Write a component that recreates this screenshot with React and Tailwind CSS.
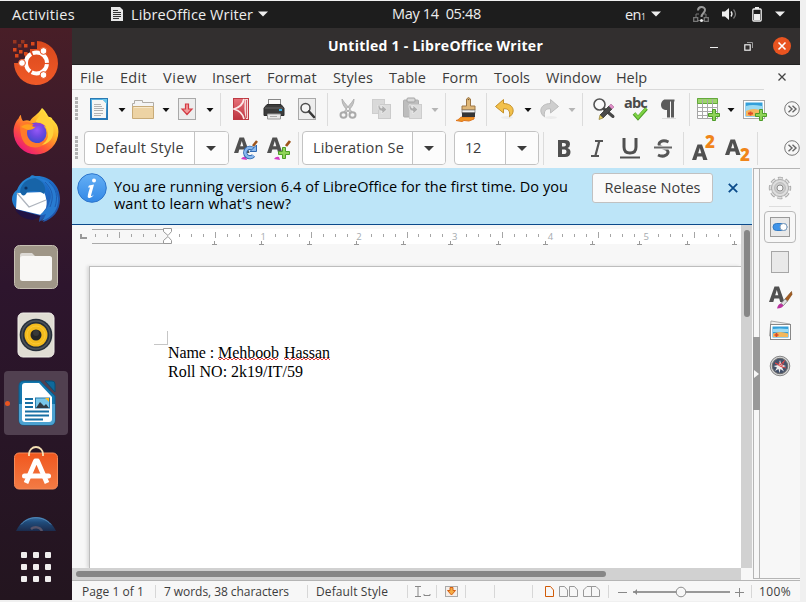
import React, { useLayoutEffect, useRef, useState } from 'react';

// Text whose tracking is adjusted so that it spans exactly `w` pixels.
function Label({ w, className = '', children }) {
  const ref = useRef(null);
  const [ls, setLs] = useState(0);
  useLayoutEffect(() => {
    const width = ref.current.getBoundingClientRect().width;
    setLs((w - width) / String(children).length);
  }, []);
  return (
    <span ref={ref} style={{ letterSpacing: ls + 'px' }} className={'inline-block whitespace-pre ' + className}>
      {children}
    </span>
  );
}

const Svg = ({ w = 24, h = 24, children, className = '' }) => (
  <svg width={w} height={h} viewBox={`0 0 ${w} ${h}`} className={'block shrink-0 ' + className} fill="none">
    {children}
  </svg>
);

const Cell = ({ className = '', children }) => <div className={'flex shrink-0 items-center ' + className}>{children}</div>;
const Sep = ({ className = 'w-[9px]' }) => (
  <div className={'shrink-0 ' + className}>
    <div className="h-[33px] w-px bg-[#dcdcdc]" />
  </div>
);
const Caret = ({ color = '#111', className = 'w-5' }) => (
  <Cell className={'justify-center ' + className}>
    <Svg w={8} h={4} className="mt-[2px]"><path d="M.5 0h7L4 4z" fill={color} /></Svg>
  </Cell>
);
const Grip = () => (
  <Cell className="w-3 pl-[3px]">
    <Svg w={3} h={24}>
      {[0, 1, 2, 3, 4, 5].map((i) => <rect key={i} y={i * 4} width="3" height="3" fill="#b3b3b3" />)}
    </Svg>
  </Cell>
);

/* ---------- dock icons ---------- */
const Ubuntu = () => (
  <Svg w={46} h={46}>
    <defs><linearGradient id="ub" x1="0" y1="0" x2="0" y2="1"><stop stopColor="#d9481c" /><stop offset="1" stopColor="#f05a28" /></linearGradient></defs>
    <path d="M24 1a22 22 0 1 1-23 22h7v-4h4v-6h5V9h7z" fill="url(#ub)" />
    {[[0, 0], [8, 0], [5, 4], [0, 8], [11, 4], [18, 2], [6, 10], [2, 14], [11, 12]].map(([x, y], i) => (
      <rect key={i} x={x} y={y} width="3.5" height="3.5" fill="#d9481c" opacity={i < 3 ? 0.55 : 1} />
    ))}
    <circle cx="23.5" cy="23" r="10.5" stroke="#fff" strokeWidth="4" strokeDasharray="20.2 1.8" strokeDashoffset="-1.2" />
    {[[9, 23], [30.5, 11], [30.5, 35]].map(([x, y]) => <circle key={y} cx={x} cy={y} r="3.4" fill="#fff" stroke="#e5501f" strokeWidth="1" />)}
  </Svg>
);
const Firefox = () => (
  <Svg w={46} h={48}>
    <defs>
      <linearGradient id="ff" x1=".85" y1=".1" x2=".2" y2=".95"><stop stopColor="#ffee45" /><stop offset=".35" stopColor="#ffad26" /><stop offset=".65" stopColor="#ff5a36" /><stop offset="1" stopColor="#e9157d" /></linearGradient>
      <radialGradient id="fp" cx=".55" cy=".35" r=".65"><stop stopColor="#9659f7" /><stop offset=".5" stopColor="#6d48e0" /><stop offset="1" stopColor="#3b4ccc" /></radialGradient>
    </defs>
    <path d="M29 1c4 3 5 7 7 9 2-.2 3 .8 3.500 2.500C44 17 45.500 20 45.400 25A22.400 22.400 0 0 1 .6 25C.4 19 3 14 5.500 11.500 6.500 9.500 7 8 8 8c0 2 .5 4 2 6 3-1 5-1 7 0C20 9 25 8 29 1z" fill="url(#ff)" />
    <circle cx="23" cy="26" r="10.500" fill="url(#fp)" />
    <path d="M7 18c3-4 9-4 15 0-2 3-5 3-7 4-2 3-1 9 3 12 7 5 15 0 17-5 2 8-8 13-17 11C9 38 7 27 7 18z" fill="#ff7a2a" />
    <path d="M29 2c0 7-6 9-6 13 8 0 12 6 12 14-1 5-4 7-6 9 10-2 13-11 11-19C38 13 32 9 29 2z" fill="#ffd13a" />
    <path d="M8 20c4-4 9-3 15-1-2 3-5 4-8 4z" fill="#ffa01e" />
    <path d="M19 19c3-4 10-4 14 1-5-2-7-1-12 0z" fill="#8b41d9" />
  </Svg>
);
const Thunderbird = () => (
  <Svg w={50} h={50}>
    <defs><linearGradient id="tb" x1="0" y1="0" x2="1" y2="1"><stop stopColor="#2c95d8" /><stop offset=".5" stopColor="#1c6bc6" /><stop offset="1" stopColor="#244b9e" /></linearGradient></defs>
    <path d="M6 16C9 8 14 5 19 3c1-2 3-2 5-1 14-1 25 9 25 23 0 12-7 20-17 23l2-5-6 5 1-6-12-2C8 38 2 34 1 26c0-5 2-8 5-10z" fill="url(#tb)" />
    <path d="M6 19 33 18q4 9 2 16l-5 7L5 35z" fill="#fff" />
    <path d="M6 19l12 14 17-7" stroke="#aeb4bd" strokeWidth="1.300" />
    <path d="M4 35l26 7-8 4C12 45 7 41 4 35z" fill="#201344" />
    <path d="M9 18C10 9 16 5 24 4c10 3 12 12 9 16-6-4-12-3-17-2-1 3-3 4-5 3z" fill="#1764a8" />
    <path d="M26 4c12 5 17 17 12 25-1 5-5 8-9 12 2 0 4 0 6-1-1 3-3 5-5 7 12-3 18-13 17-23C45 12 37 5 26 4z" fill="#287bd1" />
    <path d="M38 8c8 7 9 15 6 25M34 8c8 8 9 15 5 25" stroke="#1e5cb0" />
    <circle cx="15" cy="14" r="1.600" fill="#0b3263" />
  </Svg>
);
const Files = () => (
  <Svg w={46} h={46}>
    <rect x="1.500" y="1.500" width="43" height="43" rx="5" fill="#9f9687" stroke="#c6bfb2" />
    <path d="M7 11q0-2 2-2h10l4 4h14q2 0 2 2v5H7z" fill="#dcd9d4" />
    <rect x="7" y="12" width="32" height="25" rx="2.500" fill="#f8f7f5" />
    <path d="M7 16q0-2 2-2h11l3-2h14v6H7z" fill="#f8f7f5" />
  </Svg>
);
const Rhythmbox = () => (
  <Svg w={38} h={46}>
    <rect x="1" y="1" width="36" height="44" rx="5" fill="#e0ddd3" stroke="#f0eee8" />
    <circle cx="19" cy="23" r="16.300" fill="#27303a" />
    <circle cx="19" cy="23" r="14" stroke="#4d5359" strokeWidth="1.500" />
    <circle cx="19" cy="23" r="11.500" fill="#f3bb1c" />
    <circle cx="19" cy="23" r="9" stroke="#f8c938" strokeWidth="1" />
    <circle cx="19" cy="23" r="5.500" fill="#252525" />
    <circle cx="19" cy="21" r="3" fill="#383838" />
  </Svg>
);
const Writer = () => (
  <Svg w={38} h={46}>
    <path d="M6 1h16l15 15v24q0 5-5 5H6q-5 0-5-5V6q0-5 5-5z" fill="#1477ad" stroke="#0b5c8b" />
    <path d="M1 24h36v16q0 5-5 5H6q-5 0-5-5z" fill="#4ba1d0" />
    <path d="M7 3h14l13 14v22q0 3-3 3H7q-3 0-3-3V6q0-3 3-3z" fill="#fff" />
    <path d="M27 1h7q3 0 3 3v8z" fill="#0e699b" stroke="#0b4c72" />
    <path d="M7 19h8M7 23h8M7 27h8M7 31.500h24M7 35.500h24M7 39.500h18" stroke="#176fa3" strokeWidth="1.800" />
    <rect x="17.500" y="18" width="14" height="10" fill="#78c7ea" stroke="#267bab" />
    <path d="M18 28l4-6 4 4 2-2 3 4z" fill="#323b42" /><path d="M27 18h4v4z" fill="#ffb91e" />
  </Svg>
);
const Software = () => (
  <Svg w={46} h={44}>
    <defs><linearGradient id="sw" x1="0" y1="0" x2="0" y2="1"><stop stopColor="#f1571e" /><stop offset="1" stopColor="#f27b45" /></linearGradient></defs>
    <rect x="1.500" y="7" width="43" height="36" rx="4.500" fill="url(#sw)" stroke="#f68a59" />
    <path d="M16 10V8a7 7 0 0 1 14 0v2" stroke="#f5e0b4" strokeWidth="1.800" />
    <path d="M13 37L22.500 15h2L34 37" stroke="#fff" strokeWidth="4.800" strokeLinejoin="round" />
    <rect x="9" y="27.500" width="29" height="5" rx="2.500" fill="#fff" />
  </Svg>
);
const HelpPeek = () => (
  <Svg w={46} h={15}>
    <defs><linearGradient id="hp" x1="0" y1="0" x2="0" y2="1"><stop stopColor="#346fa5" /><stop offset=".4" stopColor="#1f4a79" /><stop offset="1" stopColor="#1b2b4c" /></linearGradient></defs>
    <path d="M3 15C8 5 15 1 23 1s15 4 20 14z" fill="url(#hp)" /><path d="M8 8.500C16-.5 30-.5 38 8.500" stroke="#5488b5" />
    <path d="M18 13c3-2.500 9-2.500 11 2" stroke="#57546a" strokeWidth="2.500" />
  </Svg>
);

/* ---------- toolbar icons ---------- */
const NewDoc = () => (
  <Svg>
    <defs><linearGradient id="nd" x1="0" y1="0" x2="0" y2="1"><stop stopColor="#59b4e4" /><stop offset="1" stopColor="#2472b8" /></linearGradient></defs>
    <rect x="3.500" y="1.500" width="17" height="21" fill="url(#nd)" stroke="#2a7ab3" />
    <path d="M5 3h11l3 3v15H5z" fill="#f6f6f4" /><path d="M15 2h5v5z" fill="#67c6ec" />
    <path d="M7 7.500h7M7 9.500h8M7 11.500h10M7 13.500h9M7 16.500h9M7 18.500h7" stroke="#b2b2b2" />
  </Svg>
);
const Folder = () => (
  <Svg>
    <path d="M1.500 20V6.500h2v-3h8v2h11V20z" fill="#f4f4f4" stroke="#b0aca6" />
    <path d="M1.500 9.500h21v12h-21z" fill="#edd3a4" stroke="#c8ab78" /><path d="M3 10.500h18" stroke="#f8e8ca" />
  </Svg>
);
const Plate = ({ fill = '#ededed' }) => <rect x="3.500" y="1.500" width="17" height="21" fill={fill} stroke="#a9a9a9" />;
const Save = () => (
  <Svg><Plate /><path d="M10.500 7h3v5h3.500L12 17.500 7 12h3.500z" fill="#f29a9a" stroke="#d33a43" strokeWidth="1.200" /></Svg>
);
const Pdf = () => (
  <Svg>
    <defs><linearGradient id="pd" x1="0" y1="0" x2="0" y2="1"><stop stopColor="#e77179" /><stop offset="1" stopColor="#bd3440" /></linearGradient></defs>
    <rect x="4.500" y="1.500" width="15" height="21" fill="url(#pd)" stroke="#bd3943" />
    <path d="M15 2C14 7 10 10.500 5 12c5 1.500 9 5 10 10" stroke="#fbeaea" strokeWidth="1.800" />
    <path d="M16 2h3v20h-2c-2-7-2-13-1-20z" fill="#f5d8d9" /><path d="M17.500 3v18" stroke="#d4636c" />
  </Svg>
);
const Print = () => (
  <Svg>
    <rect x="6.500" y="2.500" width="12" height="6" fill="#fafafa" stroke="#888" />
    <path d="M5 7.500h14l3 3.500v7.500H2V11z" fill="#3b3b3b" stroke="#2c2c2c" /><path d="M2.500 11h19" stroke="#666" />
    <rect x="17" y="12" width="3" height="2" fill="#3bb0e8" />
    <path d="M5.500 17h13v5h-13z" fill="#e9e9e9" stroke="#999" /><path d="M8 19.500h7" stroke="#aaa" />
  </Svg>
);
const Preview = () => (
  <Svg><Plate /><circle cx="10.500" cy="11" r="4.500" fill="#f5f5f5" stroke="#4d4d4d" strokeWidth="1.500" /><path d="M14 14.500l5 5.500" stroke="#383838" strokeWidth="2.600" strokeLinecap="round" /></Svg>
);
const Cut = () => (
  <Svg>
    <path d="M6 2c0 6 3 9 8 14l2-1C12 9 9 7 6 2zM18 2c0 6-3 9-8 14l-2-1c4-6 7-8 10-13z" fill="#c5c5c5" stroke="#a6a6a6" strokeWidth=".8" />
    <ellipse cx="7.500" cy="18" rx="3" ry="2.700" stroke="#aaa" strokeWidth="2" /><ellipse cx="16.500" cy="18" rx="3" ry="2.700" stroke="#aaa" strokeWidth="2" />
  </Svg>
);
const FaintArrow = () => <path transform="translate(0 1)" d="M9 7c0 4 1 6 4 6v3l5-4.500L13 7v3c-2 0-2-1-2-3z" fill="#adadad" stroke="#f0f0f0" strokeWidth=".7" />;
const Copy = () => (
  <Svg><rect x="3.500" y="2.500" width="12" height="14" fill="#d9d9d9" stroke="#cecece" /><rect x="9.500" y="7.500" width="12" height="14" fill="#dcdcdc" stroke="#cbcbcb" /><FaintArrow /></Svg>
);
const Paste = () => (
  <Svg><rect x="3.500" y="3" width="15" height="17" rx="1" fill="#bdbdbd" stroke="#afafaf" /><rect x="7" y="1" width="8" height="4" rx="1" fill="#d8d8d8" stroke="#a4a4a4" /><rect x="9.500" y="7.500" width="12" height="14" fill="#dcdcdc" stroke="#cdcdcd" /><FaintArrow /></Svg>
);
const Brush = () => (
  <Svg w={24} h={26}>
    <path d="M2 24.500c3 0 4-4 6-3.500h12v2l-5 2-5-.5-2 1z" fill="#f09522" stroke="#dd751f" />
    <path d="M12.500 3q2-3 4 0v7h4.500v4H8v-4h4.500z" fill="#dfb778" stroke="#9d7644" />
    <rect x="8" y="14" width="13" height="3" fill="#f1f1f1" stroke="#777" strokeWidth=".7" /><rect x="8" y="16.500" width="13" height="4.500" fill="#363636" />
    <circle cx="14.500" cy="3.500" r=".8" fill="#765c37" />
  </Svg>
);
const Undo = ({ faded, flip }) => (
  <Svg>
    <ellipse cx="14" cy="20.500" rx="6" ry="1.500" fill="#ececec" />
    <g transform={flip ? 'translate(24 0) scale(-1 1)' : undefined}>
      <path d="M10.500 2.500L2.500 9.500l8 6.500v-4.200c4.500-.5 7 2 6 8 6-4 5-13-6-13.300z" fill={faded ? '#cecece' : '#f3c14b'} stroke={faded ? '#bcbcbc' : '#c4902a'} strokeLinejoin="round" />
    </g>
  </Svg>
);
const Find = () => (
  <Svg>
    <circle cx="7.500" cy="7.500" r="5.500" fill="#fafafa" stroke="#555" strokeWidth="1.600" /><path d="M12 12l9 7.500" stroke="#484848" strokeWidth="3" strokeLinecap="round" />
    <path d="M8 18l9-9 3 3-9 9z" fill="#4a4a4a" stroke="#333" strokeWidth=".8" /><path d="M17 9l2-2 3 3-2 2z" fill="#df8ec8" stroke="#ac6798" strokeWidth=".6" /><path d="M8 18l-1 4.500 4-1.500z" fill="#e5cf60" stroke="#8d7b34" strokeWidth=".7" />
  </Svg>
);
const Spell = () => (
  <div className="relative h-6 w-6">
    <span className="absolute left-0 top-[-4px] font-['Open_Sans',sans-serif] text-[14.5px] font-bold leading-5 tracking-[-0.8px] text-[#4a4a4a]">abc</span>
    <Svg className="absolute inset-0"><path d="M10 16.500l4 4.500 8.500-9.500" stroke="#4c9c27" strokeWidth="3.600" /><path d="M10.500 16.500l3.500 4 8-9" stroke="#7ed344" strokeWidth="2.200" /></Svg>
  </div>
);
const Pilcrow = () => (
  <Svg><path d="M8 2.500h9.500v2H17v16h-3v-16h-1v16h-3V13c-4 0-6-2-6-5s2-5.500 4-5.500z" fill="#5b5b5b" /><path d="M5 21.500h14" stroke="#ddd" /></Svg>
);
const Plus = ({ x = 0, y = 0 }) => <path transform={`translate(${x} ${y})`} d="M4 0h3v4h4v3H7v4H4V7H0V4h4z" fill="#8fd457" stroke="#4d9c28" />;
const Table = () => (
  <Svg w={25}>
    <path d="M.5 1.500h20v20H.5z" fill="#fff" stroke="#a5a5a5" /><path d="M.5 1.500h20v5H.5z" fill="#9bd56a" stroke="#64a93c" />
    <path d="M5.500 2v20M10.500 2v20M15.500 2v20M1 10.500h20M1 14.500h20M1 18.500h20" stroke="#a9a9a9" /><Plus x={11.500} y={12.500} />
  </Svg>
);
const Picture = () => (
  <Svg w={25}>
    <rect x=".5" y="3.500" width="21" height="18" fill="#fff" stroke="#a7a7a7" /><rect x="2.500" y="5.500" width="17" height="14" fill="#339fda" />
    <path d="M3 9q6-2 16 0v5H3z" fill="#9bdaf3" /><path d="M3 14q8-4 16 0v5H3z" fill="#f4b75e" /><path d="M5 16.500h5M7.500 14.500v4" stroke="#e24d27" strokeWidth="1.800" />
    <Plus x={12.500} y={12.500} />
  </Svg>
);
const More = () => (
  <Svg w={16} h={16}><circle cx="8" cy="8" r="7.300" stroke="#777" /><path d="M4.500 4.800L8 8l-3.500 3.200M8.500 4.800L12 8l-3.500 3.200" stroke="#666" strokeWidth="1.400" /></Svg>
);
const BigA = () => <path d="M1 18L6.500 2.500h4.500L16.500 18h-4.300l-1-3.500H6.300L5.300 18zM7.200 11.300h3.100L8.800 6z" fill="#505050" />;
const StyleUpdate = () => (
  <Svg w={26} h={26}><BigA /><path d="M24 6l-4 5" stroke="#9c531a" strokeWidth="2.500" /><path d="M8 24q2-3 5-2l1 3z" fill="#d33ac3" /><path d="M20 14a4.700 4.700 0 1 0 .5 6.500" stroke="#2f68b0" strokeWidth="4.200" /><path d="M20 14a4.700 4.700 0 1 0 .5 6.500" stroke="#8ab8ed" strokeWidth="2.400" /><path d="M17 16.500h6.500V10z" fill="#8ab8ed" stroke="#2f68b0" /></Svg>
);
const StyleNew = () => (
  <Svg w={26} h={26}><BigA /><path d="M24 6l-4 5" stroke="#9c531a" strokeWidth="2.800" /><path d="M8 24q2-3 5-2l1 3z" fill="#d33ac3" /><Plus x={12.500} y={12.500} /></Svg>
);
const StylesSide = () => (
  <Svg w={26} h={26}>
    <BigA />
    <path d="M23.500 7.500l.5 3-4.500 6.500-2.500-2z" fill="#a55c20" stroke="#75400f" strokeWidth=".6" />
    <path d="M17 15l2.500 2-4 4.500-2.500-2z" fill="#e2e2e2" stroke="#777" strokeWidth=".8" />
    <path d="M9 24.500q1-4.500 4-5l2.500 2q-1.500 3-6.500 3z" fill="#b9329f" />
  </Svg>
);
const OrangeTwo = ({ className }) => (
  <span className={"absolute right-[-1px] font-['Open_Sans',sans-serif] text-[17px] font-extrabold leading-5 text-[#f08519] " + className}>2</span>
);

function Combo({ className, text, tw, boxClass, arrowClass }) {
  return (
    <div className={'flex h-[34px] shrink-0 rounded-[4px] border border-[#c3c3c3] bg-white text-[#3c3c3c] ' + className}>
      <div className={'flex items-center pb-px pl-[10px] ' + boxClass}><Label w={tw}>{text}</Label></div>
      <div className={'flex items-center justify-center rounded-r-[3px] border-l border-[#c3c3c3] bg-[#fcfcfc] ' + arrowClass}>
        <Svg w={10} h={5}><path d="M0 0h10L5 5z" fill="#3c3c3c" /></Svg>
      </div>
    </div>
  );
}

const menus = [['File', 24, 'w-10'], ['Edit', 27, 'w-[43px]'], ['View', 34, 'w-[49px]'], ['Insert', 39, 'w-[55px]'], ['Format', 50, 'w-[66px]'], ['Styles', 40, 'w-14'], ['Table', 37, 'w-[53px]'], ['Form', 36, 'w-[52px]'], ['Tools', 36, 'w-[52px]'], ['Window', 55, 'w-[70px]'], ['Help', 31, 'w-10']];

function TopBar() {
  const tri = <Svg w={10} h={6}><path d="M0 .5h10L5 5.500z" fill="#eee" /></Svg>;
  return (
    <div className="flex h-[27px] w-[800px] items-center bg-[#1d1d1d] pl-3 text-[#eeeeee]">
      <Cell className="w-[99px]"><Label w={63}>Activities</Label></Cell>
      <Cell className="w-5 pb-px"><Svg w={12} h={14}><path d="M0 0h9l3 3v11H0z" fill="#e6e6e6" /><path d="M2 3.500h5M2 5.500h8M2 7.500h8M2 9.500h8M2 11.500h6" stroke="#333" /></Svg></Cell>
      <Cell className="w-[127px]"><Label w={122}>LibreOffice Writer</Label></Cell>
      <Cell className="w-[134px] pb-px">{tri}</Cell>
      <Cell className="w-[233px] pb-px"><Label w={89}>May 14  05:48</Label></Cell>
      <Cell className="w-[26px]"><Label w={16}>en</Label><span className="mt-1 text-[8.5px]">1</span></Cell>
      <Cell className="w-[42px] pb-px">{tri}</Cell>
      <Cell className="w-[29px]">
        <Svg w={16} h={17}><path d="M3 11V8h3M13 11V8h-2M5 14.500h6" stroke="#777" /><path d="M.7 11.700h4v3.600h-4zM11.300 11.700h4v3.600h-4z" stroke="#777" strokeWidth="1.300" /><path d="M5 4.500c0-4.500 7-4.500 7-.5 0 3-3.500 3-3.500 7" stroke="#999" strokeWidth="2" /><circle cx="8.500" cy="14.500" r="1.500" fill="#eee" /></Svg>
      </Cell>
      <Cell className="w-[30px] pb-px"><Svg w={15} h={14}><path d="M0 4.500h3L7 1v12L3 9.500H0z" fill="#eee" /><path d="M9 4.500q2 2.500 0 5" stroke="#eee" strokeWidth="1.300" /><path d="M11.500 2.500q4 4.500 0 9" stroke="#777" strokeWidth="1.300" /></Svg></Cell>
      <Cell className="w-[23px] pb-px"><Svg w={10} h={15}><path d="M3 0h4v2H3z" fill="#eee" /><rect x=".8" y="2" width="8.400" height="12" rx="1" stroke="#eee" strokeWidth="1.300" /><path d="M2 7h6v6H2z" fill="#eee" /></Svg></Cell>
      <Cell className="pb-px">{tri}</Cell>
    </div>
  );
}

function Dock() {
  return (
    <div className="flex h-[572px] w-[72px] shrink-0 flex-col items-center overflow-hidden bg-linear-to-b from-[#481e27] via-[#2d152d] via-45% to-[#23151f]">
      <div className="flex h-[69px] w-full items-center justify-center"><Ubuntu /></div>
      <div className="flex h-[67px] items-center"><Firefox /></div>
      <div className="flex h-[69px] items-center"><Thunderbird /></div>
      <div className="flex h-[67px] items-center"><Files /></div>
      <div className="flex h-[69px] items-center"><Rhythmbox /></div>
      <div className="mt-[2px] flex h-16 w-16 items-center rounded-[4px] bg-[#514050]"><div className="ml-px mr-2 size-[5px] rounded-full bg-[#e95420]" /><Writer /></div>
      <div className="mt-[11px] flex h-[44px] items-center"><Software /></div>
      <div className="mt-[26px]"><HelpPeek /></div>
      <div className="mt-[21px] grid grid-cols-3 gap-[6px]">
        {Array.from({ length: 9 }, (_, i) => <div key={i} className="size-[6px] rounded-[1px] bg-[#f0eeee]" />)}
      </div>
    </div>
  );
}

function TitleBar() {
  return (
    <div className="flex h-[37px] items-center border-b border-[#222] bg-[#322f2f] text-white">
      <div className="w-[636px] pl-64 text-[14px] font-bold"><Label w={215}>Untitled 1 - LibreOffice Writer</Label></div>
      <Cell className="w-[36px]"><Svg w={12} h={6}><path d="M2 4.500h8" stroke="#eee" /></Svg></Cell>
      <Cell className="w-[29px]"><Svg w={9} h={9}><rect x=".8" y="2.800" width="5.400" height="5.400" stroke="#eee" strokeWidth="1.200" /><path d="M3 .5h5.500V6" stroke="#999" /></Svg></Cell>
      <Svg w={18} h={19}><circle cx="9" cy="9" r="9" fill="#e95420" /><path d="M5.500 5.500l7 7m0-7l-7 7" stroke="#fff" strokeWidth="1.600" /></Svg>
    </div>
  );
}

function Toolbars() {
  return (
    <>
      <div className="flex h-[39px] items-center pb-px">
        <Grip />
        <Cell className="ml-[3px] w-6"><NewDoc /></Cell><Caret className="w-5 pl-px" />
        <Cell className="w-6"><Folder /></Cell><Caret className="w-5 pl-px" />
        <Cell className="w-6"><Save /></Cell><Caret className="w-[21px]" />
        <Sep />
        <Cell className="w-[33px]"><Pdf /></Cell><Cell className="w-[33px]"><Print /></Cell><Cell className="w-8"><Preview /></Cell>
        <Sep />
        <Cell className="w-[33px]"><Cut /></Cell><Cell className="w-[31px]"><Copy /></Cell><Cell className="w-6"><Paste /></Cell><Caret className="w-[21px]" color="#b5b5b5" />
        <Sep />
        <Cell className="w-8"><Brush /></Cell>
        <Sep className="w-[7px]" />
        <Cell className="w-6"><Undo /></Cell><Caret className="w-5 pl-px" />
        <Cell className="w-6"><Undo faded flip /></Cell><Caret className="w-[21px]" color="#b5b5b5" />
        <Sep className="w-[10px]" />
        <Cell className="w-8"><Find /></Cell><Cell className="w-[33px]"><Spell /></Cell><Cell className="w-8"><Pilcrow /></Cell>
        <Sep className="w-2" />
        <Cell className="w-6"><Table /></Cell><Caret className="w-[22px] pr-[3px]" />
        <Cell className="w-[41px]"><Picture /></Cell>
        <More />
      </div>
      <div className="flex h-[39px] items-center pb-px">
        <Grip />
        <Combo className="w-[145px]" text="Default Style" tw={89} boxClass="w-[109px]" arrowClass="w-[34px] pr-px" />
        <Cell className="ml-[4px] w-[33px]"><StyleUpdate /></Cell><Cell className="w-8"><StyleNew /></Cell>
        <Sep className="w-1" />
        <Combo className="w-[144px]" text="Liberation Se" tw={91} boxClass="w-[109px]" arrowClass="w-[33px] pr-px" />
        <Combo className="ml-2 w-[85px]" text="12" tw={16} boxClass="w-[50px]" arrowClass="w-[33px]" />
        <Cell className="w-1" />
        <Sep className="w-[15px]" />
        <Cell className="w-8"><Svg h={22}><path d="M0 3h7q5 0 5 4.200Q12 10 9.500 11q3 1 3 4Q12.500 20 7 20H0zM4 6v3.500h2q2 0 2-1.700T6 6zm0 6.500V17h2.500q2 0 2-2.200t-2-2.300z" fill="#505050" /></Svg></Cell>
        <Cell className="w-[30px]"><Svg w={16} h={22}><path d="M5 4h8M1 19h8M9.300 4L5.300 19" stroke="#555" strokeWidth="2.200" /></Svg></Cell>
        <Cell className="w-[34px]"><Svg w={20} h={24}><path d="M4 2v9q0 6 6 6t6-6V2" stroke="#505050" strokeWidth="3" /><path d="M0 21.500h20" stroke="#505050" strokeWidth="2" /></Svg></Cell>
        <Cell className="w-[29px]"><Svg w={19} h={22}><path d="M14.500 5Q10 3 7 4.500 3 7 7 10l6 2.500Q16 17 10 19q-3 .5-6-1" stroke="#555" strokeWidth="3" /><path d="M0 10.500h18" stroke="#f7f7f7" strokeWidth="4" /><path d="M0 10.500h18" stroke="#666" strokeWidth="2" /></Svg></Cell>
        <Sep className="w-[9px]" />
        <Cell className="w-[33px]"><div className="relative h-7 w-[22px]"><Svg w={22} h={28}><g transform="translate(-1 8)"><BigA /></g></Svg><OrangeTwo className="top-[-2px]" /></div></Cell>
        <Cell className="w-8"><div className="relative h-7 w-6"><Svg w={24} h={28}><g transform="translate(-1 3)"><BigA /></g></Svg><OrangeTwo className="bottom-[-3px]" /></div></Cell>
        <Sep className="w-[27px]" />
        <More />
      </div>
    </>
  );
}

function Ruler() {
  const ticks = [];
  for (let i = -6; i < 48; i++) {
    const x = 95.6 + i * 11.97;
    if (i % 8 === 0 || x < 22) continue;
    ticks.push(<rect key={i} x={Math.floor(x)} y={i % 4 === 0 ? 7 : 9} width="1" height={i % 4 === 0 ? 6 : 3} fill="#a5a5a5" />);
  }
  return (
    <Svg w={669} h={41} className="font-['Open_Sans',sans-serif]">
      <path d="M96 4h573v15H96z" fill="#fff" /><path d="M20 4.500h75M20 18.500h75" stroke="#aaa" />
      <path d="M9 9v4h6" stroke="#999" strokeWidth="2" />
      {ticks}
      {[1, 2, 3, 4, 5].map((n) => <text key={n} x={95.500 + n * 95.750} y="14.5" fontSize="9.500" textAnchor="middle" fill="#a6abb0">{n}</text>)}
      {Array.from({ length: 12 }, (_, i) => <path key={i} d={`M${Math.round(142 + i * 47.25)}.500 16v3m-2.500 .5h5`} stroke="#999" />)}
      <path d="M91.500 3.500h8v3l-3.500 4-4.500-4zM91.500 18.500h8v-3l-3.500-4-4.500 4z" fill="#fff" stroke="#999" />
    </Svg>
  );
}

const Squiggle = ({ w }) => {
  let d = 'M0 1';
  for (let x = 2, i = 0; x <= w; x += 2, i++) d += `L${x} ${i % 2 ? 1 : 3}`;
  return <Svg w={w} h={4} className="absolute left-0 top-[14px]"><path d={d} stroke="#e33b3b" /></Svg>;
};

function Editor() {
  return (
    <div className="flex h-[343px]">
      <div className="h-[343px] w-[669px] overflow-hidden">
        <Ruler />
        <div className="ml-[17px] h-[302px] border-l border-t border-[#bdbdbd] bg-white shadow-[-2px_0_3px_#d9d9d9]">
          <div className="ml-[64px] mt-[64px] h-[14px] w-[14px] border-b border-r border-[#c6c6c6]" />
          <div className="ml-[78px] mt-[-2px] font-['Liberation_Serif',serif] text-[16px] leading-[19px] text-black">
            <div className="flex whitespace-pre"><Label w={50}>Name : </Label><span className="relative"><Label w={61}>Mehboob</Label><Squiggle w={61} /></span><span className="relative ml-[5px]"><Label w={46}>Hassan</Label><Squiggle w={46} /></span></div>
            <div><Label w={135}>Roll NO: 2k19/IT/59</Label></div>
          </div>
        </div>
      </div>
      <div className="w-[11px] bg-[#d1d1d1] pl-[3px] pt-[5px]"><div className="h-[87px] w-[6px] rounded-[3px] bg-[#868686]" /></div>
    </div>
  );
}

function InfoBar() {
  return (
    <div className="flex h-[57px] border-b border-[#0c4a8b] bg-[#bde5f8] text-black">
      <div className="w-[42px] pl-[5px] pt-[5px]">
        <Svg w={31} h={31}><defs><linearGradient id="inf" x1="0" y1="0" x2="0" y2="1"><stop stopColor="#65b0f5" /><stop offset="1" stopColor="#3388e6" /></linearGradient></defs><circle cx="15" cy="15" r="14.300" fill="url(#inf)" stroke="#2d75cc" /><circle cx="17" cy="7.500" r="2" fill="#fff" /><path d="M12 12.500l5-1-3 11q0 2 3-1-3 5-6 3-1-1 2-10h-2z" fill="#fff" /></Svg>
      </div>
      <div className="w-[478px] pt-[10px] leading-[17px]">
        <div className="h-[17px]"><Label w={454}>You are running version 6.4 of LibreOffice for the first time. Do you</Label></div>
        <div className="h-[17px]"><Label w={177}>want to learn what's new?</Label></div>
      </div>
      <div className="mt-[5px] flex h-[30px] w-[121px] items-center justify-center rounded-[3px] border border-[#c1c1c1] bg-[#fafafa] pb-px text-[#3c3c3c]"><Label w={96}>Release Notes</Label></div>
      <Svg w={10} h={10} className="ml-[15px] mt-[15px]"><path d="M.8.8l8.400 8.400m0-8.400L.8 9.200" stroke="#0b4b8a" strokeWidth="1.800" /></Svg>
    </div>
  );
}

function Sidebar() {
  return (
    <div className="flex h-[411px] w-[47px] border-b border-t border-[#b5b5b5]">
      <div className="w-[7px] border-l border-r border-[#b5b5b5]">
        <div className="-ml-px mt-[168px] flex h-[73px] w-[7px] items-center bg-[#999]"><Svg w={6} h={8}><path d="M1 0l5 4-5 4z" fill="#f7f7f7" /></Svg></div>
      </div>
      <div className="flex w-10 flex-col items-center">
        <Svg className="mt-[7px]"><circle cx="12" cy="12" r="9.500" stroke="#a3a3a3" strokeWidth="3.400" strokeDasharray="4.600 2.862" strokeDashoffset="2.300" /><circle cx="12" cy="12" r="9.200" stroke="#dedede" strokeWidth="2.400" strokeDasharray="3.600 3.626" strokeDashoffset="1.800" /><circle cx="12" cy="12" r="8.500" fill="#dedede" stroke="#a0a0a0" strokeWidth=".8" /><circle cx="12" cy="12" r="5.500" fill="#ccc" stroke="#b0b0b0" strokeWidth=".7" /><circle cx="12" cy="12" r="3" fill="#f7f7f7" stroke="#8c8c8c" /></Svg>
        <div className="mt-[6px] h-px w-[22px] bg-[#ddd]" />
        <div className="mt-[4px] flex h-8 w-8 items-center justify-center rounded-[4px] border border-[#b9b9b9]"><Svg w={20} h={20}><rect x=".5" y=".5" width="19" height="19" fill="#e8e8e8" stroke="#999" /><rect x="3" y="6.500" width="14" height="7" rx="3.500" fill="#3f94e9" stroke="#327bc5" /><circle cx="13.500" cy="10" r="3.500" fill="#fff" stroke="#89a2bb" /></Svg></div>
        <Svg w={18} h={22} className="mt-2"><rect x=".5" y=".5" width="17" height="21" fill="#e9e9e9" stroke="#a6a6a6" /></Svg>
        <div className="ml-px mt-[11px]"><StylesSide /></div>
        <div className="mt-[9px]"><Svg w={25}><path d="M3 2l19 3-2 14L1.500 17z" fill="#eee" stroke="#aaa" /><g transform="translate(2 2)"><rect x=".5" y="3.500" width="20" height="15" fill="#fff" stroke="#888" /><rect x="2.500" y="5.500" width="16" height="11" fill="#339fda" /><path d="M3 8q6-1 15 0v3H3z" fill="#9bdaf3" /><path d="M3 12.500q7-3 15 0V16H3z" fill="#f2b75c" /><path d="M4.500 14h4M6.500 12v4" stroke="#dc4a27" strokeWidth="1.600" /></g></Svg></div>
        <Svg className="mt-[11px]"><circle cx="12" cy="12" r="9.800" fill="#d2d2d2" stroke="#858585" /><circle cx="12" cy="12" r="7.700" fill="#44516a" stroke="#6b6b6b" /><path d="M12 6l1.300 4.500L18 12l-4 1.500 2 4-3.500-2.500-1 4-1-4L7 17l2-3.500L5.500 12l5-1z" fill="#eee" /><path d="M16.500 6.500l-3 6.500-6.500-4 5 2zM11 8l3 5 4 1" stroke="#df4848" strokeWidth=".9" /></Svg>
      </div>
    </div>
  );
}

const SSep = () => <div className="h-[13px] w-px shrink-0 bg-[#d7d7d7]" />;
function Status() {
  return (
    <div className="flex h-[21px] items-center border-t border-[#b5b5b5] pt-px text-[12px] text-[#3c3c3c]">
      <Cell className="w-[83px] pl-[10px]"><Label w={62}>Page 1 of 1</Label></Cell><SSep />
      <Cell className="w-[151px] pl-2"><Label w={125}>7 words, 38 characters</Label></Cell><SSep />
      <Cell className="w-[99px] pl-2"><Label w={72}>Default Style</Label></Cell><SSep />
      <Cell className="w-[28px] pl-[7px]"><Svg w={17} h={11}><path d="M0 .5h6M3 1v9M0 10.500h6M9 8v1.500h6V8" stroke="#888" /></Svg></Cell><SSep />
      <Cell className="w-[28px] pl-2"><Svg w={13} h={11}><rect x=".5" y=".5" width="12" height="10" fill="#f5eee8" stroke="#aaa" /><path d="M5 1.500h3v3h2.500L6.500 9 2.500 4.500H5z" fill="#f4ac43" stroke="#d46116" /></Svg></Cell><SSep />
      <Cell className="w-7" /><SSep /><Cell className="w-[37px]" /><SSep />
      <Cell className="w-[75px] pl-3"><Svg w={56} h={11}><path d="M.5.5h5L8.500 4v6.500h-8z" stroke="#d15b08" /><path d="M14.500.5h5l3 3.500v6.500h-8zM24.500.5h5l3 3.500v6.500h-8zM38.500 4L42 .5h4.500v10h-8zM46.500.5H51L54.500 4v6.500h-8z" stroke="#999" /></Svg></Cell><SSep />
      <Cell className="w-[142px] pl-[9px]"><Svg w={128} h={12}><path d="M0 6.500h9M117 6.500h9M121.500 2v9" stroke="#888" /><path d="M15 6h97" stroke="#999" strokeWidth="2" /><path d="M16 6l3-3v6z" fill="#888" /><circle cx="63" cy="6" r="4.800" fill="#f7f7f7" stroke="#8e8e8e" /></Svg></Cell><SSep />
      <Cell className="pl-[7px]"><Label w={32}>100%</Label></Cell>
    </div>
  );
}

export default function App() {
  return (
    <div className="h-[602px] w-[806px] overflow-hidden bg-[#f0f0f0] pt-px font-['Open_Sans','Noto_Sans',sans-serif] text-[14.5px] leading-5">
      <TopBar />
      <div className="flex w-[800px]">
        <Dock />
        <div className="h-[573px] w-[728px] bg-[#f7f7f7]">
          <TitleBar />
          <div className="flex h-[25px] items-center pl-2 text-[#3c3c3c]">
            {menus.map(([name, w, cls]) => <Cell key={name} className={cls}><Label w={w}>{name}</Label></Cell>)}
            <Svg w={8} h={8} className="mb-[2px] ml-[122px]"><path d="M.5.5l7 7m0-7l-7 7" stroke="#444" strokeWidth="1.300" /></Svg>
          </div>
          <div className="-mt-px h-px w-[692px] bg-[#d9d9d9]" />
          <Toolbars />
          <div className="flex h-[412px]">
            <div className="w-[681px]">
              <div className="w-[680px]">
                <InfoBar />
                <Editor />
                <div className="flex h-3"><div className="w-[669px] bg-[#d1d1d1] pl-1 pt-[3px]"><div className="h-[6px] w-[530px] rounded-[3px] bg-[#868686]" /></div></div>
              </div>
            </div>
            <Sidebar />
          </div>
          <Status />
        </div>
      </div>
    </div>
  );
}
